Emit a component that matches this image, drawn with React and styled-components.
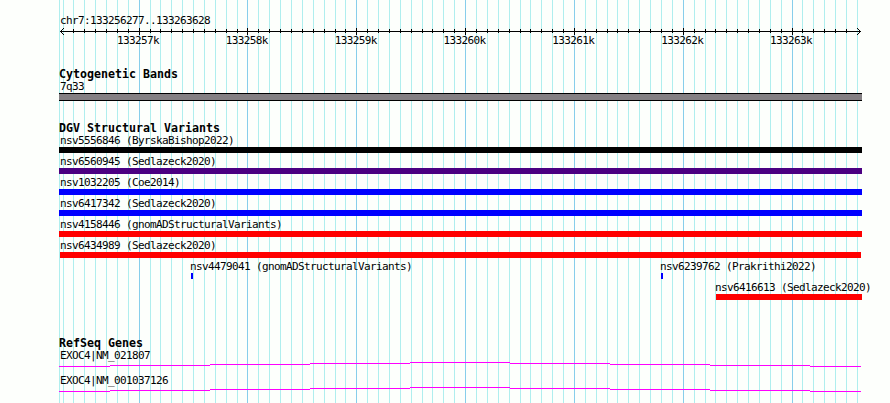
import React from 'react'
import styled, { createGlobalStyle } from 'styled-components'

const GlobalStyle = createGlobalStyle`
    body {
        margin: 0;
        background: #fdfffc;
    }
`;

const Browser = styled.main`
    position: relative;
    width: 890px;
    height: 403px;
    overflow: hidden;
    box-sizing: border-box;
    padding: 15px 0 0 59px;
    color: #000;
    background: #fdfffc;
    font-family: 'DejaVu Sans Mono', 'Liberation Mono', monospace;
    font-size: 11px;
    letter-spacing: -0.623px;
    white-space: pre;
`;

const Grid = styled.svg`
    position: absolute;
    left: 0;
    top: 0;
`;

const Content = styled.div`
    position: relative;
    width: 803px;
`;

const Label = styled.div`
    height: 12px;
    line-height: 12px;
    padding-left: 1px;
`;

const Ruler = styled.div`
    height: 53px;
    & svg {
        display: block;
    }
`;

const RulerLabels = styled.div`
    display: flex;
    height: 12px;
    line-height: 12px;
    padding-left: 58px;
    & span {
        flex: none;
        width: ${109 - 0.17}px;
    }
`;

const Section = styled.section`
    height: ${({ $height }) => $height}px;
`;

const Title = styled.h2`
    margin: 0;
    height: 13px;
    line-height: 12px;
    font-size: 11.63px;
    font-weight: bold;
    letter-spacing: 0;
`;

const Band = styled.div`
    height: 6px;
    border: solid #000;
    border-width: 1px 0;
    background: #848083;
`;

const Row = styled.div`
    display: flex;
    height: 21px;
`;

const Variant = styled.div`
    flex: none;
    width: ${({ $width }) => $width}px;
    margin-left: ${({ $gap }) => $gap || 0}px;
`;

const Bar = styled.div`
    width: ${({ $width }) => $width}px;
    height: 6px;
    margin-left: ${({ $offset }) => $offset || 0}px;
    background: ${({ $color }) => $color};
`;

const Gene = styled.div`
    height: 25px;
    & svg {
        display: block;
    }
`;

const START = 133256277;
const majors = [139, 247, 356, 465, 574, 683, 792];
const lines = [
    59, 63, 73, 84, 95, 106, 117, 128, 139, 150, 160, 171, 182, 193, 204, 215, 226, 237, 247,
    258, 269, 280, 291, 302, 313, 324, 335, 345, 356, 367, 378, 389, 400, 411, 422, 432, 443,
    454, 465, 476, 487, 498, 509, 520, 530, 541, 552, 563, 574, 585, 596, 607, 617, 628, 639,
    650, 661, 672, 683, 694, 705, 715, 726, 737, 748, 759, 770, 781, 792, 802, 813, 824, 835,
    846, 857,
];

const rows = [
    [{ name: 'nsv5556846 (ByrskaBishop2022)', color: '#000', width: 803 }],
    [{ name: 'nsv6560945 (Sedlazeck2020)', color: '#4b0082', width: 803 }],
    [{ name: 'nsv1032205 (Coe2014)', color: '#00f', width: 803 }],
    [{ name: 'nsv6417342 (Sedlazeck2020)', color: '#00f', width: 803 }],
    [{ name: 'nsv4158446 (gnomADStructuralVariants)', color: '#f00', width: 803 }],
    [{ name: 'nsv6434989 (Sedlazeck2020)', color: '#f00', width: 801, offset: 1 }],
    [
        { name: 'nsv4479041 (gnomADStructuralVariants)', color: '#00f', width: 2, offset: 2, gap: 130, box: 300 },
        { name: 'nsv6239762 (Prakrithi2022)', color: '#00f', width: 2, offset: 2, gap: 170, box: 200 },
    ],
    [{ name: 'nsv6416613 (Sedlazeck2020)', color: '#f00', width: 146, offset: 2, gap: 655, box: 160 }],
];

const genes = ['EXOC4|NM_021807', 'EXOC4|NM_001037126'];

const Gridlines = () => (
    <Grid width='890' height='403' shapeRendering='crispEdges'>
        {lines.map((x) => (
            <rect key={x} x={x} y='0' width='1' height='403' fill={majors.includes(x) ? '#87ceeb' : '#afeeee'} />
        ))}
    </Grid>
)

const Axis = () => (
    <svg width='803' height='8' viewBox='59 27 803 8' shapeRendering='crispEdges'>
        <rect x='60' y='31' width='801' height='1' />
        {lines.slice(2, -1).map((x) => {
            const major = majors.includes(x);
            return <rect key={x} x={x} y={major ? 28 : 29} width='1' height={major ? 7 : 4} />
        })}
        {[1, 2, 3].map((d) => (
            <g key={d}>
                <rect x={60 + d} y={31 - d} width='1' height='1' />
                <rect x={60 + d} y={31 + d} width='1' height='1' />
                <rect x={860 - d} y={31 - d} width='1' height='1' />
                <rect x={860 - d} y={31 + d} width='1' height='1' />
            </g>
        ))}
    </svg>
)

// introns are drawn as a shallow arch, one pixel per step
const Intron = () => (
    <svg width='803' height='5' shapeRendering='crispEdges'>
        <g fill='#f0f'>
            <rect x='0' y='4' width='51' height='1' />
            {[3, 2, 1, 0, 1, 2, 3].map((y, i) => (
                <rect key={i} x={51 + i * 100} y={y} width='100' height='1' />
            ))}
            <rect x='751' y='4' width='51' height='1' />
        </g>
    </svg>
)

const App = () => {
    return (
        <>
            <GlobalStyle />
            <Browser>
                <Gridlines />
                <Content>
                    <Ruler>
                        <Label>chr7:{START}..133263628</Label>
                        <Axis />
                        <RulerLabels>
                            {majors.map((x, i) => (
                                <span key={x}>{133257 + i}k</span>
                            ))}
                        </RulerLabels>
                    </Ruler>
                    <Section $height={54}>
                        <Title>Cytogenetic Bands</Title>
                        <Label>7q33</Label>
                        <Band />
                    </Section>
                    <Section $height={215}>
                        <Title>DGV Structural Variants</Title>
                        {rows.map((row) => (
                            <Row key={row[0].name}>
                                {row.map((v) => (
                                    <Variant key={v.name} $width={v.box || 803} $gap={v.gap}>
                                        <Label>{v.name}</Label>
                                        <Bar $width={v.width} $offset={v.offset} $color={v.color} />
                                    </Variant>
                                ))}
                            </Row>
                        ))}
                    </Section>
                    <Section $height={66}>
                        <Title>RefSeq Genes</Title>
                        {genes.map((name) => (
                            <Gene key={name}>
                                <Label>{name}</Label>
                                <Intron />
                            </Gene>
                        ))}
                    </Section>
                </Content>
            </Browser>
        </>
    )
}

export default App
